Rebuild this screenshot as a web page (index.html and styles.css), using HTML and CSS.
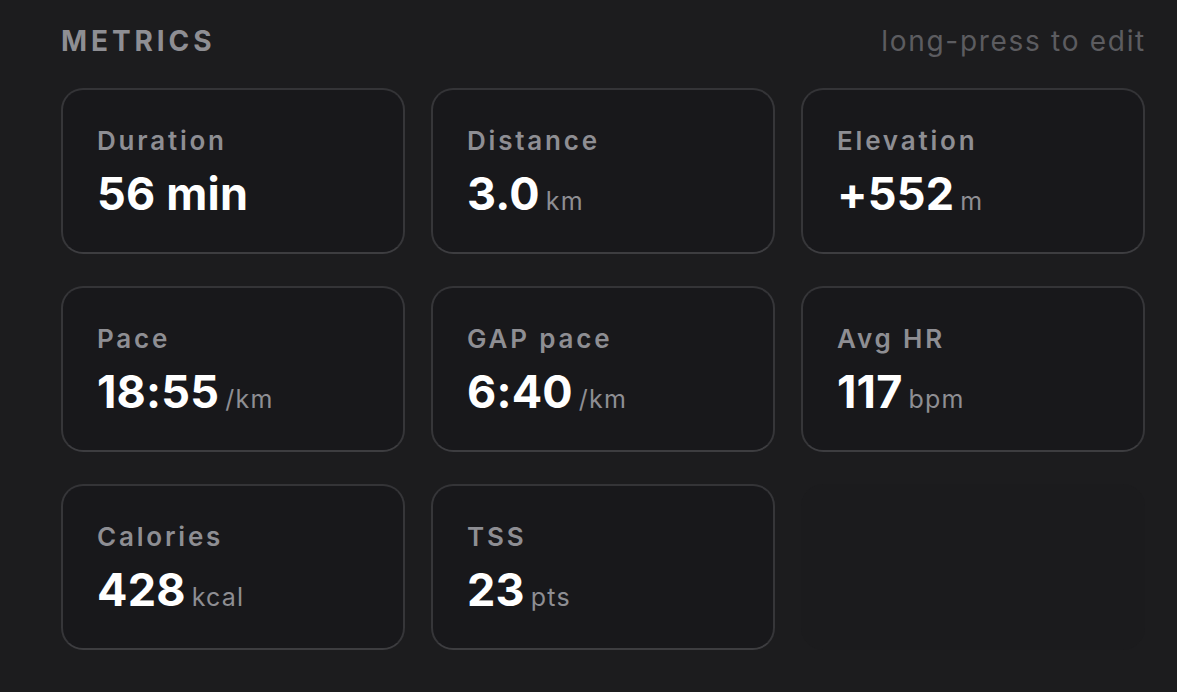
FILE: index.html
```html
<!DOCTYPE html>
<html>
<head>
<meta charset="utf-8">
<link rel="stylesheet" href="styles.css">
</head>
<body>
<div class="page">
  <div class="head">
    <div class="title">METRICS</div>
    <div class="hint">long-press to edit</div>
  </div>
  <div class="grid">
    <div class="card"><div class="label">Duration</div><div class="value">56 min</div></div>
    <div class="card"><div class="label">Distance</div><div class="value">3.0<span class="unit">km</span></div></div>
    <div class="card"><div class="label">Elevation</div><div class="value">+552<span class="unit">m</span></div></div>
    <div class="card"><div class="label">Pace</div><div class="value">18:55<span class="unit">/km</span></div></div>
    <div class="card"><div class="label">GAP pace</div><div class="value">6:40<span class="unit">/km</span></div></div>
    <div class="card"><div class="label">Avg HR</div><div class="value">117<span class="unit">bpm</span></div></div>
    <div class="card"><div class="label">Calories</div><div class="value">428<span class="unit">kcal</span></div></div>
    <div class="card"><div class="label">TSS</div><div class="value">23<span class="unit">pts</span></div></div>
    <div class="ghost"></div>
  </div>
</div>
</body>
</html>
```

FILE: styles.css
```css
html, body {
  margin: 0;
  padding: 0;
  background: #1c1c1e;
  height: 100%;
}
body {
  font-family: Inter, "Noto Sans", "Liberation Sans", sans-serif;
  overflow: hidden;
}
.page {
  padding: 24px 32px 0 61px;
}
.head {
  display: flex;
  justify-content: space-between;
  align-items: baseline;
  height: 64px;
}
.title {
  font-size: 28px;
  font-weight: 700;
  letter-spacing: 3.9px;
  color: #8e8e93;
  line-height: 34px;
}
.hint {
  font-size: 28px;
  font-weight: 400;
  letter-spacing: 1.7px;
  color: #5c5c60;
  line-height: 34px;
  margin-right: -1px;
}
.grid {
  display: grid;
  grid-template-columns: repeat(3, 344px);
  grid-auto-rows: 166px;
  column-gap: 26px;
  row-gap: 32px;
}
.card {
  box-sizing: border-box;
  background: #18181b;
  border: 2px solid #363639;
  border-top-color: #343437;
  border-bottom-color: #3d3d40;
  border-radius: 22px;
  padding: 35px 0 0 34px;
}
.ghost {
  border-radius: 22px;
  background: #1b1b1d;
  box-shadow: 0 0 2px rgba(255,255,255,0.02);
}
.label {
  font-size: 26px;
  font-weight: 600;
  letter-spacing: 2.8px;
  color: #8e8e93;
  line-height: 32px;
}
.value {
  margin-top: 13px;
  font-size: 45px;
  font-weight: 700;
  color: #ffffff;
  line-height: 48px;
  letter-spacing: 0.2px;
}
.unit {
  font-size: 25px;
  font-weight: 400;
  color: #8e8e93;
  margin-left: 6px;
  letter-spacing: 1.2px;
}
```
